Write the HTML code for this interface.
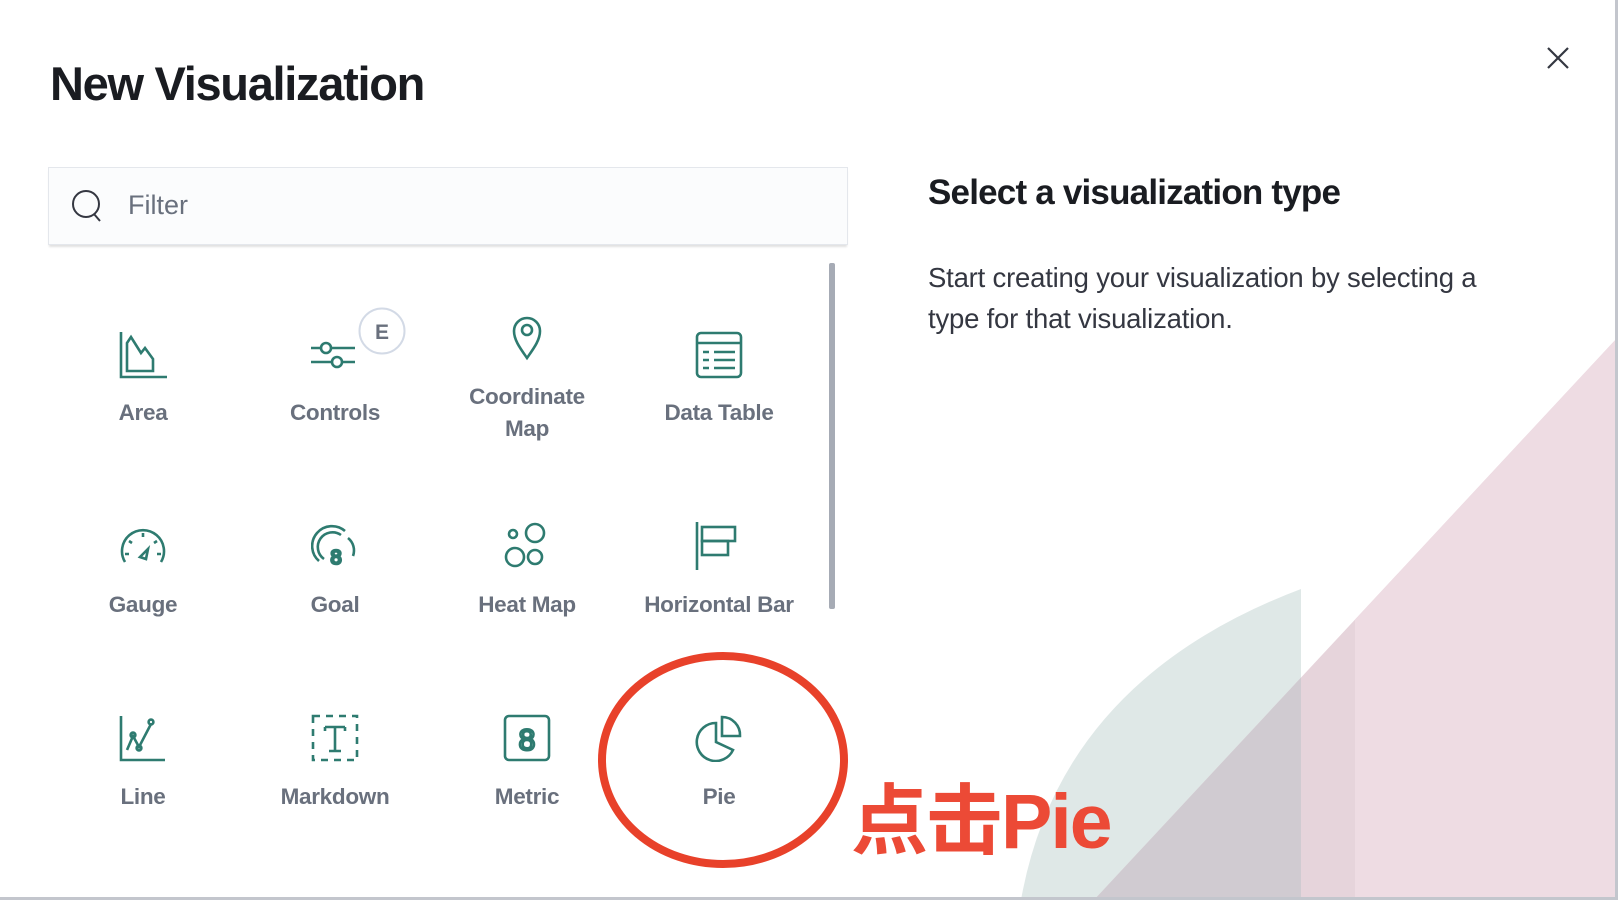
<!DOCTYPE html>
<html><head><meta charset="utf-8">
<style>
*{margin:0;padding:0;box-sizing:border-box}
html,body{width:1618px;height:900px;overflow:hidden;background:#fff;font-family:"Liberation Sans","Noto Sans CJK SC",sans-serif;position:relative}
.abs{position:absolute}
.title{left:50px;top:56px;font-size:47px;font-weight:bold;color:#1a1c21;letter-spacing:-1.3px;white-space:nowrap}
.search{left:48px;top:167px;width:800px;height:78px;background:#fbfcfd;border:1px solid #e4e7ec;box-shadow:0 3px 2px -1px rgba(0,0,0,.12)}
.filter{left:128px;top:190px;font-size:27px;color:#69707d}
.scroll{left:829px;top:263px;width:6px;height:346px;background:#a6abb5;border-radius:2px}
.h2{left:928px;top:173px;font-size:35px;font-weight:bold;color:#1a1c21;letter-spacing:-0.8px;white-space:nowrap}
.p{left:928px;top:257px;font-size:27.5px;line-height:41px;color:#343741;width:600px;letter-spacing:-0.2px}
.lbl{position:absolute;width:190px;text-align:center;font-size:22.5px;font-weight:bold;color:#69707d;line-height:32px;letter-spacing:-0.3px}
.ic{position:absolute;width:48px;height:48px}
.ic *{fill:none;stroke:#2e7b70;stroke-width:2.6;stroke-linecap:butt}
</style></head><body>

<svg class="abs" style="left:0;top:0" width="1618" height="900">
  <defs>
    <clipPath id="tri"><path d="M1618,337 L1618,900 L1094,900 Z"/></clipPath>
  </defs>
  <path d="M1021,900 Q1060,680 1301,589 L1301,900 Z" fill="#dfe8e7"/>
  <path d="M1618,337 L1618,900 L1094,900 Z" fill="#e6d4db"/>
  <g clip-path="url(#tri)">
    <path d="M1021,900 Q1060,680 1301,589 L1301,900 Z" fill="#d0cbd1"/>
    <rect x="1355" y="0" width="263" height="900" fill="#eedce3"/>
  </g>
  <rect x="1615" y="0" width="3" height="900" fill="#c3c6cd"/>
  <rect x="0" y="897" width="1618" height="3" fill="#c3c6cd"/>
</svg>

<div class="abs title">New Visualization</div>
<svg class="abs" style="left:1547px;top:47px" width="22" height="22"><path d="M1 1L21 21M21 1L1 21" stroke="#343741" stroke-width="2.2"/></svg>

<div class="abs search"></div>
<svg class="abs" style="left:70px;top:188px" width="36" height="36"><circle cx="16" cy="16" r="13" fill="none" stroke="#343741" stroke-width="2"/><path d="M24 26L30 33" stroke="#343741" stroke-width="2"/></svg>
<div class="abs filter">Filter</div>
<div class="abs scroll"></div>

<div class="abs h2">Select a visualization type</div>
<div class="abs p">Start creating your visualization by selecting a type for that visualization.</div>

<!-- Row 1 -->
<svg class="ic" style="left:119px;top:331px" viewBox="0 0 48 48"><path d="M2 1V46H48"/><path d="M8 40V12L12 6L22 22L26 17L34 28V40Z"/></svg>
<div class="lbl" style="left:48px;top:397px">Area</div>

<svg class="ic" style="left:311px;top:331px" viewBox="0 0 48 48"><path d="M0 17H10M20 17H44"/><circle cx="15" cy="17" r="5"/><path d="M0 31H21M31 31H44"/><circle cx="26" cy="31" r="5"/></svg>
<svg class="abs" style="left:358px;top:307px" width="48" height="48"><circle cx="24" cy="24" r="22.5" fill="#fff" stroke="#d3dae6" stroke-width="2"/><text x="24" y="32" text-anchor="middle" font-family="Liberation Sans" font-weight="bold" font-size="21" fill="#69707d">E</text></svg>
<div class="lbl" style="left:240px;top:397px">Controls</div>

<svg class="ic" style="left:503px;top:313px" viewBox="0 0 48 48"><path d="M24 45C17 35 11 27 11 18A13 13 0 0 1 37 18C37 27 31 35 24 45Z"/><circle cx="24" cy="17" r="5"/></svg>
<div class="lbl" style="left:432px;top:381px">Coordinate<br>Map</div>

<svg class="ic" style="left:695px;top:331px" viewBox="0 0 48 48"><rect x="2" y="2" width="44" height="44" rx="4"/><path d="M2 12H46M8 21H14M19 21H40M8 29H14M19 29H40M8 37H14M19 37H40"/></svg>
<div class="lbl" style="left:624px;top:397px">Data Table</div>

<!-- Row 2 -->
<svg class="ic" style="left:119px;top:522px" viewBox="0 0 48 48"><path d="M6 40A21 21 0 1 1 42 40"/><path d="M24 11V15M10 19L13 21M38 19L35 21M6 32H10M42 32H38"/><path d="M21 35L29 27L27 37Z" fill="#2e7b70"/></svg>
<div class="lbl" style="left:48px;top:589px">Gauge</div>

<svg class="ic" style="left:311px;top:522px" viewBox="0 0 48 48"><path d="M8 39A18 18 0 0 1 34 9"/><path d="M13 37A13 13 0 0 1 30 13"/><path d="M37 16A16 16 0 0 1 42 34"/><text x="25" y="42" text-anchor="middle" font-family="Liberation Sans" font-size="20" fill="#2e7b70" stroke="none">8</text></svg>
<div class="lbl" style="left:240px;top:589px">Goal</div>

<svg class="ic" style="left:503px;top:522px" viewBox="0 0 48 48"><circle cx="10" cy="12" r="4"/><circle cx="32" cy="11" r="9"/><circle cx="12" cy="35" r="9"/><circle cx="32" cy="35" r="7"/></svg>
<div class="lbl" style="left:432px;top:589px">Heat Map</div>

<svg class="ic" style="left:695px;top:522px" viewBox="0 0 48 48"><path d="M2 0V48"/><rect x="7" y="5" width="33" height="14"/><rect x="7" y="19" width="26" height="14"/></svg>
<div class="lbl" style="left:624px;top:589px">Horizontal Bar</div>

<!-- Row 3 -->
<svg class="ic" style="left:119px;top:714px" viewBox="0 0 48 48"><path d="M2 2V46H46"/><path d="M8 36L14 22L20 33L32 10" stroke-width="2"/><circle cx="14" cy="21" r="2.4" fill="#2e7b70"/><circle cx="20" cy="34" r="2.4" fill="#2e7b70"/><circle cx="32" cy="8" r="2.4" fill="#2e7b70"/></svg>
<div class="lbl" style="left:48px;top:781px">Line</div>

<svg class="ic" style="left:311px;top:714px" viewBox="0 0 48 48"><rect x="2" y="2" width="44" height="44" stroke-dasharray="7 6"/><path d="M14 13H34M24 13V37M18 37H30M14 13V17M34 13V17"/></svg>
<div class="lbl" style="left:240px;top:781px">Markdown</div>

<svg class="ic" style="left:503px;top:714px" viewBox="0 0 48 48"><rect x="2" y="2" width="44" height="44" rx="4"/><text x="24" y="36" text-anchor="middle" font-family="Liberation Sans" font-size="30" fill="#2e7b70" stroke="none">8</text></svg>
<div class="lbl" style="left:432px;top:781px">Metric</div>

<svg class="ic" style="left:695px;top:714px" viewBox="0 0 48 48"><path d="M21 9A19 19 0 1 0 38 36L21 28Z"/><path d="M27 3A18 18 0 0 1 45 22H27Z"/></svg>
<div class="lbl" style="left:624px;top:781px">Pie</div>

<svg class="abs" style="left:0;top:0" width="1618" height="900"><ellipse cx="723" cy="760" rx="121" ry="104" fill="none" stroke="#e8412a" stroke-width="8"/></svg>
<div class="abs" style="left:851px;top:760px;font-size:77px;font-weight:bold;color:#ec4a36;font-family:'Liberation Sans','Noto Sans CJK SC',sans-serif;letter-spacing:-2px;white-space:nowrap">点击Pie</div>

</body></html>
